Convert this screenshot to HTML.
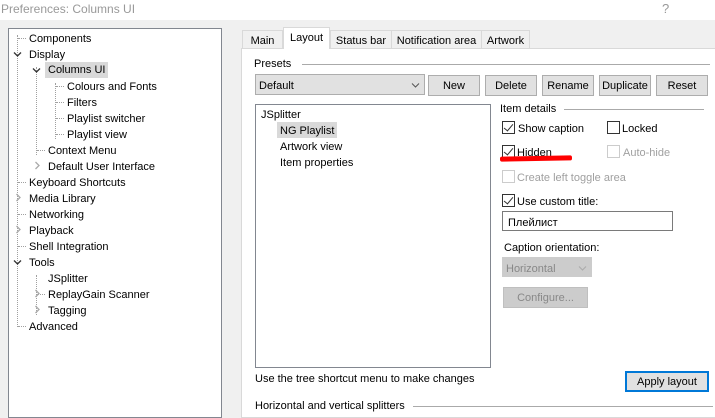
<!DOCTYPE html>
<html><head><meta charset="utf-8"><style>
*{margin:0;padding:0;box-sizing:border-box}
body{width:715px;height:409px;overflow:hidden;background:#f0f0f0;font-family:"Liberation Sans",sans-serif;font-size:11px;color:#000;position:relative}
.a{position:absolute;white-space:nowrap}
.title{left:0;top:0;width:715px;height:20px;background:#fff;color:#999;font-size:12px;padding:2px 0 0 1px}
.tree{left:8px;top:28px;width:214px;height:390px;background:#fff;border:1px solid #828790}
.t{position:absolute;height:16px;line-height:16px;padding:0 2px;margin-top:1px}
.btn{position:absolute;height:21px;border:1px solid #adadad;background:#e1e1e1;text-align:center;line-height:20px}
.cb{position:absolute;width:13px;height:13px;border:1px solid #333;background:#fff}
.cb.c::after{content:"";position:absolute;left:3px;top:0px;width:4px;height:8px;border:solid #333;border-width:0 1.5px 1.5px 0;transform:rotate(40deg)}
.dis{color:#a0a0a0}
.vd{position:absolute;border-left:1px dotted #a0a0a0}
.hd{position:absolute;border-top:1px dotted #a0a0a0;width:8px}
.ic{position:absolute;width:9px;height:9px}
.tab{position:absolute;top:30px;height:19px;border:1px solid #d9d9d9;background:#f0f0f0;padding:4px 0 0 0;text-align:center}
.lb{margin-top:1px}
</style></head><body>
<div class="a title">Preferences: Columns UI</div>
<div class="a" style="left:662px;top:1px;color:#999;font-size:13px">?</div>
<div class="a tree">
 <div class="vd" style="left:8px;top:6px;height:292px"></div>
 <div class="vd" style="left:27px;top:38px;height:88px"></div>
 <div class="vd" style="left:46px;top:54px;height:56px"></div>
 <div class="vd" style="left:27px;top:246px;height:40px"></div>
 <div class="hd" style="left:9px;top:9px"></div>
 <div class="hd" style="left:47px;top:57px"></div><div class="hd" style="left:47px;top:73px"></div><div class="hd" style="left:47px;top:89px"></div><div class="hd" style="left:47px;top:105px"></div>
 <div class="hd" style="left:28px;top:121px"></div><div class="hd" style="left:9px;top:153px"></div><div class="hd" style="left:9px;top:185px"></div><div class="hd" style="left:9px;top:217px"></div><div class="hd" style="left:28px;top:265px"></div><div class="hd" style="left:9px;top:297px"></div>
 <svg class="ic" style="left:4px;top:21px" viewBox="0 0 9 9"><path d="M1 2.5 L4.5 6 L8 2.5" fill="none" stroke="#333" stroke-width="1.3"/></svg>
 <svg class="ic" style="left:23px;top:37px" viewBox="0 0 9 9"><path d="M1 2.5 L4.5 6 L8 2.5" fill="none" stroke="#333" stroke-width="1.3"/></svg>
 <svg class="ic" style="left:24px;top:132px" viewBox="0 0 9 9"><path d="M2.5 1 L6 4.5 L2.5 8" fill="none" stroke="#aaa" stroke-width="1.3"/></svg>
 <svg class="ic" style="left:5px;top:164px" viewBox="0 0 9 9"><path d="M2.5 1 L6 4.5 L2.5 8" fill="none" stroke="#aaa" stroke-width="1.3"/></svg>
 <svg class="ic" style="left:5px;top:196px" viewBox="0 0 9 9"><path d="M2.5 1 L6 4.5 L2.5 8" fill="none" stroke="#aaa" stroke-width="1.3"/></svg>
 <svg class="ic" style="left:4px;top:229px" viewBox="0 0 9 9"><path d="M1 2.5 L4.5 6 L8 2.5" fill="none" stroke="#333" stroke-width="1.3"/></svg>
 <svg class="ic" style="left:24px;top:260px" viewBox="0 0 9 9"><path d="M2.5 1 L6 4.5 L2.5 8" fill="none" stroke="#aaa" stroke-width="1.3"/></svg>
 <svg class="ic" style="left:24px;top:276px" viewBox="0 0 9 9"><path d="M2.5 1 L6 4.5 L2.5 8" fill="none" stroke="#aaa" stroke-width="1.3"/></svg>
 <div class="t" style="left:18px;top:1px">Components</div>
 <div class="t" style="left:18px;top:17px">Display</div>
 <div class="t" style="left:36px;top:32px;background:#d9d9d9;padding:0 3px">Columns UI</div>
 <div class="t" style="left:56px;top:49px">Colours and Fonts</div>
 <div class="t" style="left:56px;top:65px">Filters</div>
 <div class="t" style="left:56px;top:81px">Playlist switcher</div>
 <div class="t" style="left:56px;top:97px">Playlist view</div>
 <div class="t" style="left:37px;top:113px">Context Menu</div>
 <div class="t" style="left:37px;top:129px">Default User Interface</div>
 <div class="t" style="left:18px;top:145px">Keyboard Shortcuts</div>
 <div class="t" style="left:18px;top:161px">Media Library</div>
 <div class="t" style="left:18px;top:177px">Networking</div>
 <div class="t" style="left:18px;top:193px">Playback</div>
 <div class="t" style="left:18px;top:209px">Shell Integration</div>
 <div class="t" style="left:18px;top:225px">Tools</div>
 <div class="t" style="left:37px;top:241px">JSplitter</div>
 <div class="t" style="left:37px;top:257px">ReplayGain Scanner</div>
 <div class="t" style="left:37px;top:273px">Tagging</div>
 <div class="t" style="left:18px;top:289px">Advanced</div>
</div>
<div class="a" style="left:241px;top:48px;width:480px;height:370px;background:#fff;border:1px solid #d9d9d9"></div>
<div class="tab" style="left:242px;width:41px">Main</div>
<div class="tab" style="left:283px;top:27px;height:22px;width:47px;border-bottom:none;background:#fff">Layout</div>
<div class="tab" style="left:330px;width:62px">Status bar</div>
<div class="tab" style="left:391px;width:91px">Notification area</div>
<div class="tab" style="left:481px;width:49px">Artwork</div>
<div class="a lb" style="left:254px;top:57px">Presets</div>
<div class="a" style="left:302px;top:64px;width:408px;border-top:1px solid #aaa"></div>
<div class="a" style="left:255px;top:74px;width:170px;height:21px;border:1px solid #adadad;background:#e1e1e1;padding:5px 0 0 3px">Default<svg style="position:absolute;right:4px;top:6px;width:9px;height:9px" viewBox="0 0 9 9"><path d="M1 2.5 L4.5 6 L8 2.5" fill="none" stroke="#555" stroke-width="1"/></svg></div>
<div class="btn" style="left:428px;top:75px;width:52px">New</div>
<div class="btn" style="left:485px;top:75px;width:52px">Delete</div>
<div class="btn" style="left:542px;top:75px;width:52px">Rename</div>
<div class="btn" style="left:599px;top:75px;width:52px">Duplicate</div>
<div class="btn" style="left:656px;top:75px;width:52px">Reset</div>
<div class="a" style="left:255px;top:104px;width:236px;height:264px;border:1px solid #828790;background:#fff"></div>
<div class="a lb" style="left:261px;top:108px">JSplitter</div>
<div class="a" style="left:277px;top:122px;background:#d9d9d9;padding:3px 3px 1px">NG Playlist</div>
<div class="a lb" style="left:280px;top:140px">Artwork view</div>
<div class="a lb" style="left:280px;top:156px">Item properties</div>
<div class="a lb" style="left:500px;top:102px">Item details</div>
<div class="a" style="left:564px;top:109px;width:140px;border-top:1px solid #aaa"></div>
<div class="cb c" style="left:502px;top:121px"></div><div class="a lb" style="left:518px;top:122px">Show caption</div>
<div class="cb" style="left:607px;top:121px"></div><div class="a lb" style="left:622px;top:122px">Locked</div>
<div class="cb c" style="left:502px;top:145px"></div><div class="a lb" style="left:517px;top:146px">Hidden</div>
<div class="a" style="left:500px;top:156px;width:72px;height:5px;background:#f00;border-radius:2px;transform:rotate(-1deg)"></div>
<div class="cb" style="left:607px;top:145px;border-color:#ccc"></div><div class="a dis lb" style="left:623px;top:146px">Auto-hide</div>
<div class="cb" style="left:502px;top:170px;border-color:#ccc"></div><div class="a dis lb" style="left:517px;top:171px">Create left toggle area</div>
<div class="cb c" style="left:502px;top:194px"></div><div class="a lb" style="left:517px;top:195px">Use custom title:</div>
<div class="a" style="left:502px;top:211px;width:171px;height:20px;border:1px solid #7a7a7a;padding:5px 0 0 5px">Плейлист</div>
<div class="a lb" style="left:504px;top:241px">Caption orientation:</div>
<div class="a dis" style="left:502px;top:257px;width:90px;height:20px;border:1px solid #ccc;background:#ccc;padding:5px 0 0 3px;color:#888">Horizontal<svg style="position:absolute;right:4px;top:6px;width:9px;height:9px" viewBox="0 0 9 9"><path d="M1 2.5 L4.5 6 L8 2.5" fill="none" stroke="#aaa" stroke-width="1"/></svg></div>
<div class="a" style="left:503px;top:287px;width:85px;height:21px;border:1px solid #bfbfbf;background:#ccc;color:#888;text-align:center;line-height:20px">Configure...</div>
<div class="a lb" style="left:255px;top:372px">Use the tree shortcut menu to make changes</div>
<div class="btn" style="left:625px;top:371px;width:84px;border:2px solid #0078d7;line-height:18px">Apply layout</div>
<div class="a lb" style="left:255px;top:399px">Horizontal and vertical splitters</div>
<div class="a" style="left:413px;top:406px;width:300px;border-top:1px solid #aaa"></div>
</body></html>
